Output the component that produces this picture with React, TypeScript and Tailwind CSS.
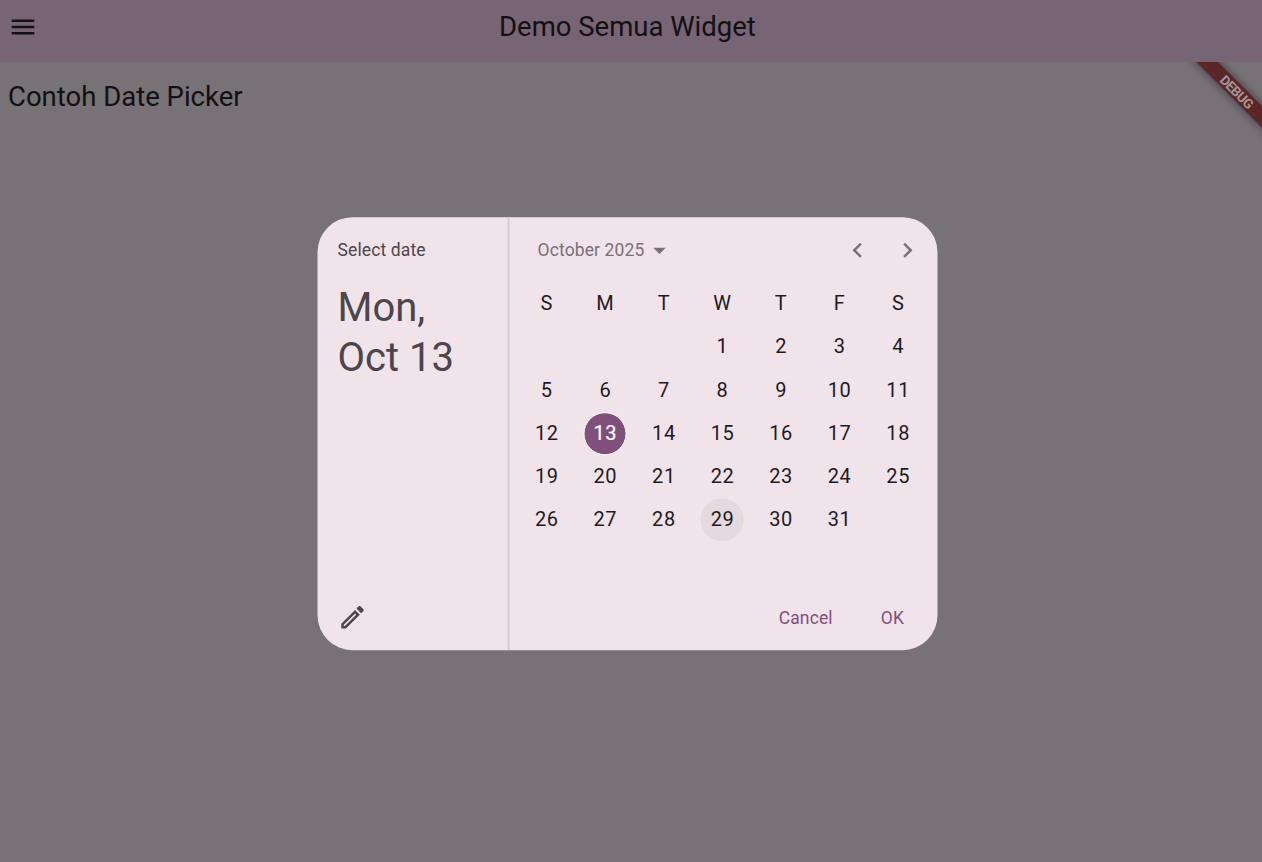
import React from 'react';

const weekdays = ['S', 'M', 'T', 'W', 'T', 'F', 'S'];
const leadingBlanks = 3;
const selectedDay = 13;
const hoveredDay = 29;
const cells: (number | null)[] = [
  ...Array.from({ length: leadingBlanks }, () => null),
  ...Array.from({ length: 31 }, (_, i) => i + 1),
];

function Day({ day }: { day: number | null }) {
  if (day === null) return <div />;
  const selected = day === selectedDay;
  const hovered = day === hoveredDay;
  return (
    <div className="flex items-center justify-center">
      <button
        className={
          selected
            ? 'flex size-[43px] items-center justify-center rounded-full border-[1.25px] border-[#fdf9fb] bg-[#814f7c] text-white [-webkit-text-stroke:0.2px_white]'
            : hovered
              ? 'flex size-[43px] items-center justify-center rounded-full bg-[#e3d9de]'
              : 'flex size-[43px] items-center justify-center rounded-full'
        }
      >
        <span className="relative -top-[0.4px]">{day}</span>
      </button>
    </div>
  );
}

function DebugBanner() {
  return (
    <svg className="absolute right-0 top-0" width="100" height="100" viewBox="0 0 100 100">
      <defs>
        <filter id="soft" x="-50%" y="-50%" width="200%" height="200%">
          <feGaussianBlur stdDeviation="4.8" />
        </filter>
      </defs>
      <path d="M20-36 136 80V101.5L0-34.5Z" fill="#000" opacity=".5" filter="url(#soft)" />
      <path d="M20-36 136 80V101.5L0-34.5Z" fill="#5b2628" />
      <text
        transform="translate(74.8 30) rotate(45)"
        textAnchor="middle"
        y="4.8"
        textLength="41"
        fill="#a39495"
        className="font-['Roboto',sans-serif] text-[13.5px] font-bold"
      >
        DEBUG
      </text>
    </svg>
  );
}

export default function App() {
  return (
    <div className="relative flex h-[862px] w-[1262px] flex-col overflow-hidden bg-[#777276] font-['Roboto',sans-serif] text-[#121012]">
      <header className="flex h-[62px] shrink-0 items-center bg-[#776474] pb-2">
        <button className="ml-2 flex size-[30px] items-center justify-center" aria-label="Menu">
          <svg width="30" height="30" viewBox="0 0 24 24" fill="#121012">
            <path d="M3 18h18v-2H3v2zm0-5h18v-2H3v2zm0-7v2h18V6H3z" />
          </svg>
        </button>
        <h1 className="mb-0.5 ml-[461px] whitespace-nowrap text-[27.5px] leading-[35px]">Demo Semua Widget</h1>
      </header>
      <main className="relative flex-1 overflow-hidden px-2 pt-[17px]">
        <h2 className="text-[27.5px] leading-[35px]">Contoh Date Picker</h2>
        <DebugBanner />
      </main>

      <section className="absolute left-[317px] top-[217px] flex h-[433px] w-[620px] translate-x-[0.5px] translate-y-[0.2px] overflow-hidden rounded-[35px] bg-[#f0e4ea]">
        <aside className="flex w-[190px] shrink-0 flex-col pb-[18px] pl-5 pt-[21px] text-[#4e444b]">
          <div className="text-[17.5px] leading-[25px] tracking-[0.125px]">Select date</div>
          <div className="mt-5 text-[40px] leading-[50px]">
            Mon,
            <br />
            Oct 13
          </div>
          <button className="mt-auto size-[30px]" aria-label="Edit">
            <svg width="30" height="30" viewBox="0 0 24 24" fill="#4e444b">
              <path d="M14.06 9.02l.92.92L5.92 19H5v-.92l9.06-9.06M17.66 3c-.25 0-.51.1-.7.29l-1.83 1.83 3.75 3.75 1.83-1.83c.39-.39.39-1.02 0-1.41l-2.34-2.34c-.2-.2-.45-.29-.71-.29zm-3.6 3.19L3 17.25V21h3.75L17.81 9.94l-3.75-3.75z" />
            </svg>
          </button>
        </aside>
        <div className="w-[1.5px] shrink-0 bg-[#d5cad2]" />
        <div className="flex min-w-0 flex-1 flex-col">
          <div className="flex h-[65px] shrink-0 items-center pl-[28.5px] pr-[15px] text-[#7b7078]">
            <span className="pt-0.5 text-[17.5px] leading-[25px] tracking-[0.125px]">October 2025</span>
            <svg width="30" height="30" viewBox="0 0 24 24" fill="#7b7078">
              <path d="M7 10l5 5 5-5z" />
            </svg>
            <div className="ml-auto flex gap-5">
              <button aria-label="Previous month">
                <svg width="30" height="30" viewBox="0 0 24 24" fill="#7b7078">
                  <path d="M15.41 7.41L14 6l-6 6 6 6 1.41-1.41L10.83 12z" />
                </svg>
              </button>
              <button aria-label="Next month">
                <svg width="30" height="30" viewBox="0 0 24 24" fill="#7b7078">
                  <path d="M10 6L8.59 7.41 13.17 12l-4.58 4.59L10 18l6-6z" />
                </svg>
              </button>
            </div>
          </div>
          <div className="grid auto-rows-[43.2px] grid-cols-7 pl-[8.5px] pr-[10px] text-[20px] leading-[30px] tracking-[0.6px] text-[#1f1a1e]">
            {weekdays.map((name, i) => (
              <div key={i} className="flex items-center justify-center pb-0.5">
                {name}
              </div>
            ))}
            {cells.map((day, i) => (
              <Day key={i} day={day} />
            ))}
          </div>
          <div className="mt-auto flex h-[65px] shrink-0 items-center justify-end gap-12 pr-[33.5px] pt-0.5 text-[17.5px] tracking-[0.125px] text-[#814f7c]">
            <button>Cancel</button>
            <button>OK</button>
          </div>
        </div>
      </section>
    </div>
  );
}
